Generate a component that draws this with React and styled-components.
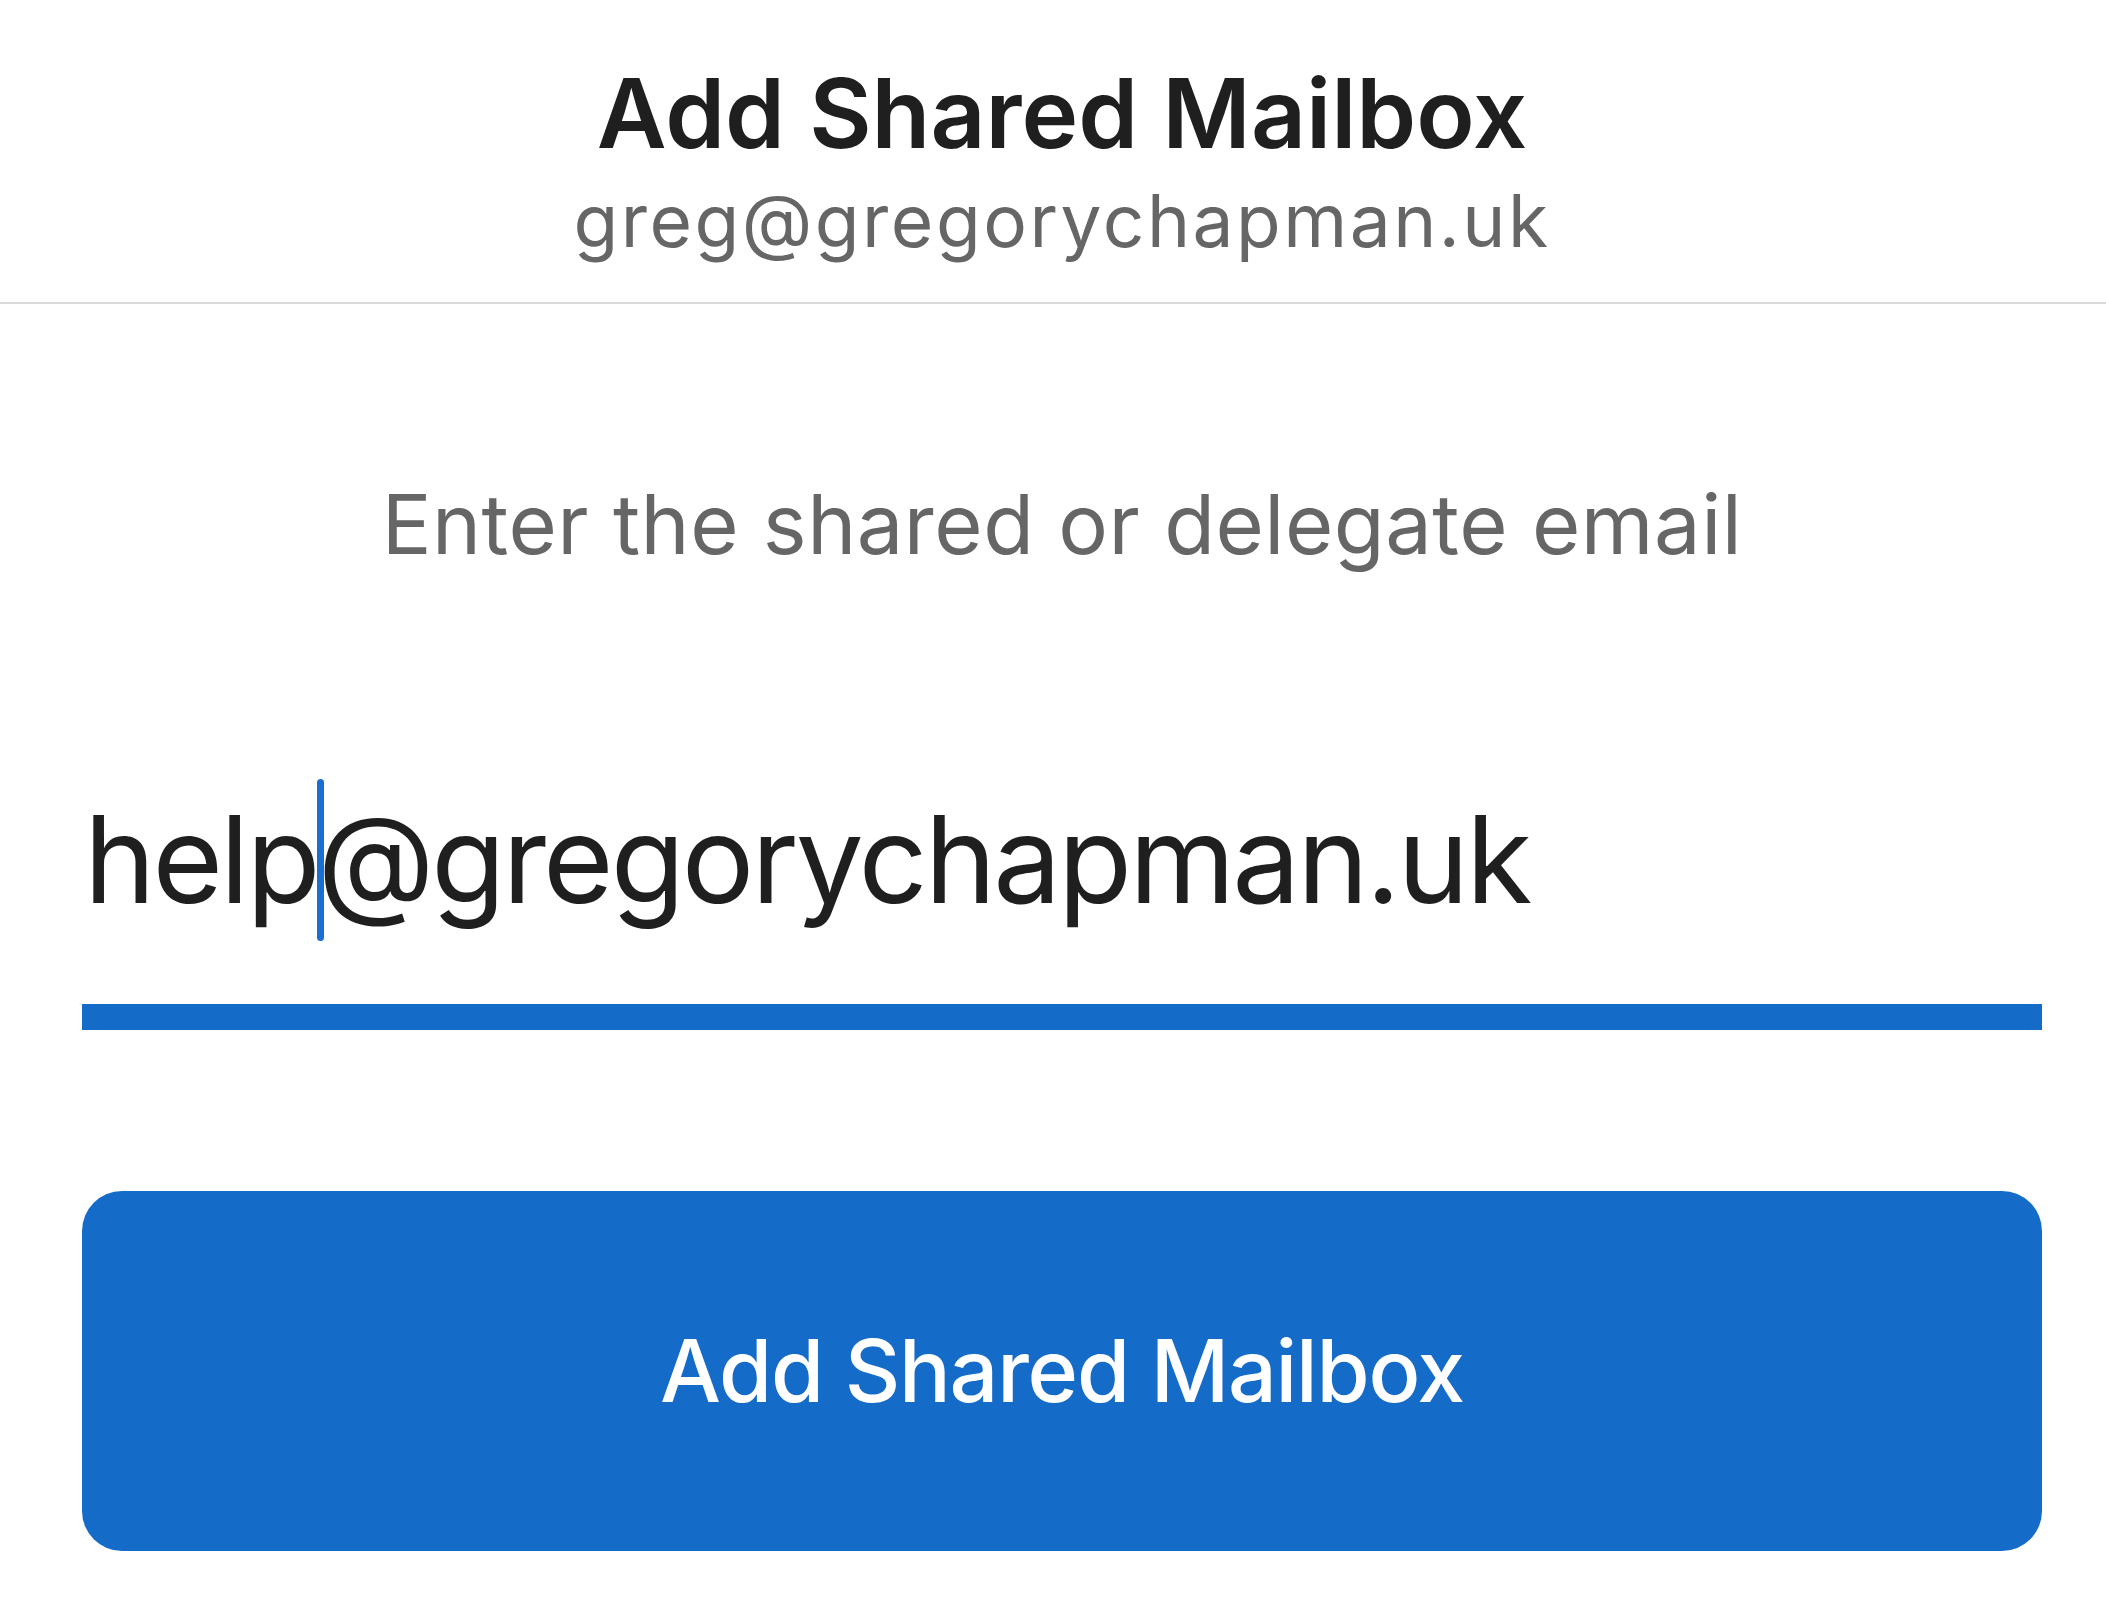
import styled, { createGlobalStyle } from 'styled-components';

const GlobalStyle = createGlobalStyle`
    html, body {
        margin: 0;
        padding: 0;
        background: #ffffff;
    }
    body {
        font-family: Inter, "Noto Sans", "Liberation Sans", sans-serif;
        -webkit-font-smoothing: antialiased;
    }
`;

const Page = styled.div`
    width: 2106px;
    min-height: 1600px;
    background: #ffffff;
`;

const Header = styled.header`
    height: 304px;
    border-bottom: 2px solid #d9d9d9;
    display: flex;
    flex-direction: column;
    align-items: center;
    padding: 65px 64px 0 82px;
    box-sizing: border-box;
`;

const Title = styled.h1`
    margin: 0;
    font-size: 96px;
    line-height: 96px;
    font-weight: 600;
    color: #1f1f1f;
    letter-spacing: 0;
`;

const Subtitle = styled.div`
    margin-top: 23px;
    font-size: 73px;
    line-height: 73px;
    color: #666666;
    letter-spacing: 2.5px;
`;

const Body = styled.main`
    display: flex;
    flex-direction: column;
    padding: 179px 64px 0 82px;
`;

const Prompt = styled.p`
    margin: 0;
    text-align: center;
    font-size: 83px;
    line-height: 83px;
    color: #666666;
    letter-spacing: 0.5px;
`;

const Field = styled.div`
    margin-top: 233px;
    padding: 0 0 84px 2px;
    border-bottom: 26px solid #156cc8;
    font-size: 121px;
    line-height: 121px;
    color: #1f1f1f;
    letter-spacing: -3px;
    white-space: nowrap;
`;

const Caret = styled.span`
    display: inline-block;
    width: 7px;
    height: 162px;
    margin: -22px -6px -22px -1px;
    border-radius: 4px;
    background: #1a6fd0;
    vertical-align: -16px;
`;

const PrimaryButton = styled.button`
    margin-top: 161px;
    height: 360px;
    border: none;
    border-radius: 40px;
    background: #156cc8;
    color: #ffffff;
    font-family: inherit;
    font-size: 86px;
    font-weight: 500;
    letter-spacing: -1.2px;
    cursor: pointer;
`;

export default function App() {
    return (
        <Page>
            <GlobalStyle />
            <Header>
                <Title>Add Shared Mailbox</Title>
                <Subtitle>greg@gregorychapman.uk</Subtitle>
            </Header>
            <Body>
                <Prompt>Enter the shared or delegate email</Prompt>
                <Field>
                    help<Caret />@gregorychapman.uk
                </Field>
                <PrimaryButton>Add Shared Mailbox</PrimaryButton>
            </Body>
        </Page>
    );
}
